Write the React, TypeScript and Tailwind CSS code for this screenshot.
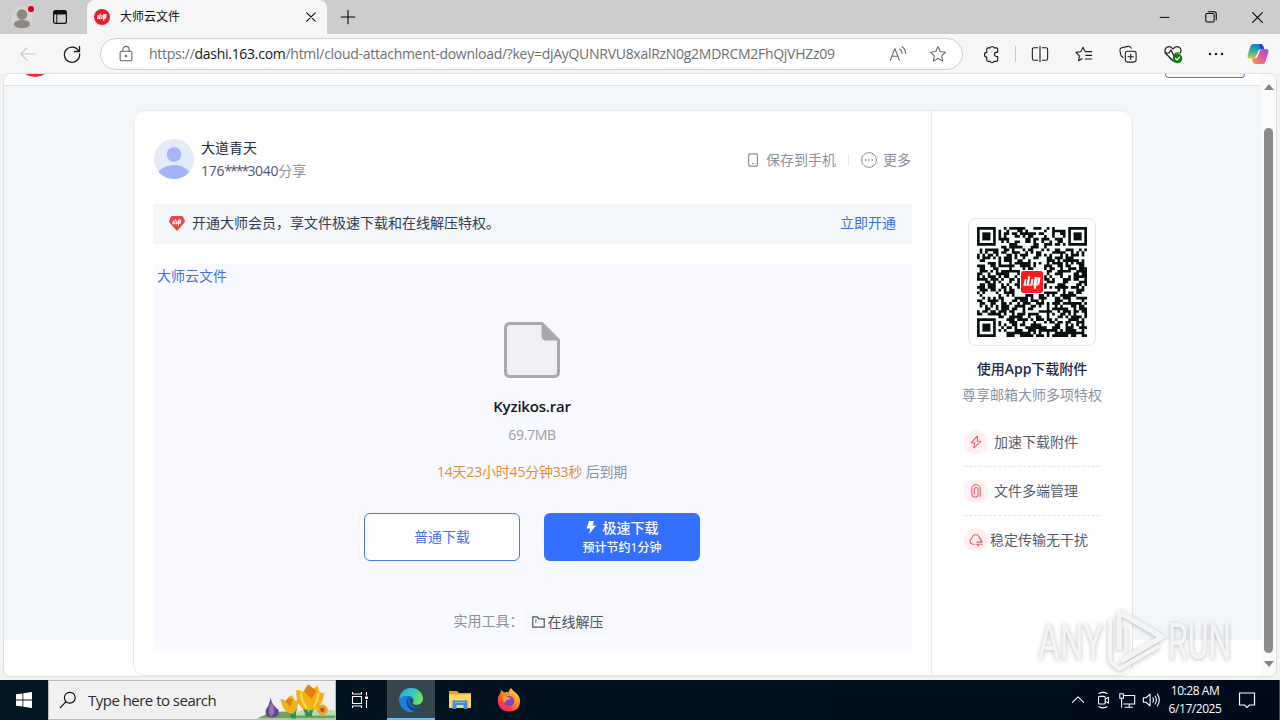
import type { ReactNode } from "react";

const QR_SIZE = 41;

function inFinder(x: number, y: number) {
  return (x < 8 && y < 8) || (x > QR_SIZE - 9 && y < 8) || (x < 8 && y > QR_SIZE - 9);
}

function buildQrPath() {
  let seed = 20163;
  let d = "";
  for (let y = 0; y < QR_SIZE; y++) {
    for (let x = 0; x < QR_SIZE; x++) {
      seed = (seed * 1103515245 + 12345) % 2147483648;
      const dark = (seed >> 16) % 100 < 54;
      const center = x > 15 && x < 25 && y > 15 && y < 25;
      if (dark && !center && !inFinder(x, y)) d += `M${x} ${y}h1v1h-1z`;
    }
  }
  return d;
}

const QR_PATH = buildQrPath();

function BrandMark({ color = "#fff" }: { color?: string }) {
  return (
    <g stroke={color} strokeWidth="1.6" fill="none">
      <path d="M3.400 6.500 2.500 11.600M6.200 4.300 4.900 11.600M8.700 6.500 7.800 11.600M11.300 4.800 10.100 11.600M14.100 5.200 13.200 10.500M11.900 5.800 10.400 14.200" />
      <path d="M2 11.100h6.200M10.500 5.700h3.500M10.500 11h2.800" strokeWidth=".9" />
    </g>
  );
}

function QrCode() {
  return (
    <svg width="110" height="110" viewBox="0 0 41 41" fill="#07120f">
      <path d={QR_PATH} shapeRendering="geometricPrecision" />
      {[[0, 0], [34, 0], [0, 34]].map(([x, y]) => (
        <g key={`${x}-${y}`}>
          <path fillRule="evenodd" d={`M${x} ${y}h7v7h-7zM${x + 1} ${y + 1}v5h5v-5z`} />
          <rect x={x + 2} y={y + 2} width="3" height="3" />
        </g>
      ))}
      <rect x="16" y="16" width="9" height="9" rx="1" fill="#fff" />
      <rect x="16.400" y="16.400" width="8.200" height="8.200" rx="0.900" fill="#fb1b22" />
      <g transform="translate(16.500 16.300) scale(.48)">
        <BrandMark />
      </g>
    </svg>
  );
}

function Icon({ size = 20, className = "", children }: { size?: number; className?: string; children: ReactNode }) {
  return (
    <svg
      width={size}
      height={size}
      viewBox="0 0 20 20"
      fill="none"
      stroke="currentColor"
      strokeWidth="1.2"
      strokeLinecap="round"
      strokeLinejoin="round"
      className={`shrink-0 ${className}`}
    >
      {children}
    </svg>
  );
}

function TabStrip() {
  return (
    <div className="flex h-[34px] shrink-0 bg-[#cdcdcd]">
      <div className="flex w-[87px] items-center rounded-br-lg pl-[11px]">
        <svg width="26" height="26" viewBox="0 0 26 26">
          <circle cx="11" cy="13.500" r="11" fill="#d6d3d1" />
          <circle cx="11" cy="10.500" r="5.200" fill="#8c8783" />
          <path d="M3 20c0-2.800 3.500-4 8-4s8 1.200 8 4c0 2.500-3.500 4.200-8 4.200S3 22.500 3 20z" fill="#8c8783" />
          <circle cx="20" cy="5" r="4" fill="#d6cccc" />
          <circle cx="20" cy="5" r="3.100" fill="#c50f1f" />
        </svg>
        <svg width="16" height="16" viewBox="0 0 16 16" className="ml-[15px]">
          <rect x="1.600" y="1.600" width="12.800" height="12.800" rx="2" fill="none" stroke="#111" strokeWidth="1.200" />
          <path d="M1.500 5.500V3.500q0-2 2-2h9q2 0 2 2v2z" fill="#111" />
          <path d="M4.800 5v9" stroke="#111" />
        </svg>
      </div>
      <div className="flex w-[240px] items-center rounded-t-lg bg-[#f7f7f7] pl-[7px]">
        <svg width="16" height="16" viewBox="0 0 16 16">
          <circle cx="8" cy="8" r="8" fill="#ea1d2c" />
          <g transform="translate(1.800 1.400) scale(.74)">
            <BrandMark />
          </g>
        </svg>
        <span className="ml-2.5 text-xs leading-4 text-[#111]">大师云文件</span>
        <Icon size={14} className="ml-auto mr-[9px] text-black">
          <path d="m4 4 12 12M16 4 4 16" strokeWidth="1.500" />
        </Icon>
      </div>
      <Icon size={18} className="ml-3 mt-2 text-black">
        <path d="M10 2.500v15M2.500 10h15" />
      </Icon>
      <div className="ml-auto mr-[15px] flex items-center gap-[32px] text-black">
        <Icon size={16} className="-mr-px">
          <path d="M4 10.500h11" />
        </Icon>
        <Icon size={14}>
          <rect x="2.500" y="5" width="12" height="12" rx="2" strokeWidth="1.500" />
          <path d="M6 2.500h8.500q3 0 3 3V14" strokeWidth="1.500" />
        </Icon>
        <Icon size={15}>
          <path d="m3.500 3.500 13 13M16.500 3.500l-13 13" strokeWidth="1.500" />
        </Icon>
      </div>
    </div>
  );
}

function Toolbar() {
  return (
    <div className="flex h-10 shrink-0 items-center bg-[#f7f7f7] text-[#1b1b1b]">
      <Icon size={18} className="ml-[19px] text-[#c9c9c9]">
        <path d="M18 10H2M9 3l-7 7 7 7" />
      </Icon>
      <Icon size={20} className="ml-[25px]">
        <path d="M16.800 7.200A7.600 7.600 0 1 0 17.600 10M17.500 2.500v5h-5" strokeWidth="1.300" />
      </Icon>
      <div className="ml-[18px] flex h-8 w-[863px] items-center rounded-full border border-[#d0d0d0] bg-white text-[#666]">
        <Icon size={18} className="ml-4">
          <rect x="3.500" y="7" width="13" height="10.500" rx="1.500" />
          <path d="M6.500 7V5a3.500 3.500 0 0 1 7 0v2" />
          <circle cx="10" cy="12.200" r=".8" fill="currentColor" />
        </Icon>
        <span className="ml-[14px] whitespace-nowrap text-sm tracking-[-0.28px] text-[#6f6f6f]">
          https://<span className="text-[#161616]">dashi.163.com</span>/html/cloud-attachment-download/?key=djAyQUNRVU8xalRzN0g2MDRCM2FhQjVHZz09
        </span>
        <Icon size={18} className="ml-auto">
          <path d="m1.500 17 5-13 5 13M3.500 12.500h6.200M12 4.500q2.500 1.500 2.500 5M14.500 2q4 2.800 4 7.500" />
        </Icon>
        <Icon size={18} className="ml-[22px] mr-[15px]">
          <path d="m10 1.800 2.500 5.400 5.900.8-4.300 4 1.100 5.900-5.200-2.900-5.200 2.900 1.100-5.900-4.300-4 5.900-.8z" />
        </Icon>
      </div>
      <Icon size={19} className="ml-[19px]">
        <path d="M6.500 3h2.200a2 2 0 0 1 3.800 0H15q1.500 0 1.500 1.500v3h-1a2.300 2.300 0 0 0 0 4.600h1v3.500q0 1.600-1.500 1.600h-2.500a2 2 0 0 1-3.800 0H6.500Q5 17.200 5 15.600v-3a2.400 2.400 0 0 1 0-4.800V4.500Q5 3 6.500 3z" />
      </Icon>
      <div className="ml-[14px] h-4 w-px bg-[#c9c9c9]" />
      <div className="ml-[15px] flex items-center gap-[26px]">
        <Icon size={18}>
          <path d="M7.500 3H3.500Q1.500 3 1.500 5v10q0 2 2 2h4M12.500 3h4q2 0 2 2v10q0 2-2 2h-4M10 1.500v17" />
        </Icon>
        <Icon size={18}>
          <path d="M7.800 15.200 4 17.500l.9-5.400L1 8.200l5.400-.8L8.900 2.500l2.500 4.900h7.100M12 11.500h6.500M11.500 15.500h7" />
        </Icon>
        <Icon size={18}>
          <rect x="7" y="7" width="12" height="12" rx="2.500" />
          <path d="M13 10v6M10 13h6M4.500 14Q2.500 13 2 11L1 6Q.8 3.500 3 3l7-1.500q2.500-.3 3.500 2" />
        </Icon>
        <Icon size={20}>
          <path d="M10 17 2.800 9.500C-.5 4 6.500 0 10 5c3.500-5 10.500-1 7.200 4M2 9h4l2-3 3 6 2-3h3" />
          <circle cx="14.500" cy="14.500" r="4.800" fill="#0f7b16" stroke="none" />
          <path d="m12.500 14.500 1.500 1.500 2.600-2.900" stroke="#fff" />
        </Icon>
        <Icon size={16} className="-ml-px">
          <g fill="currentColor" stroke="none">
            <circle cx="2.500" cy="10" r="1.600" />
            <circle cx="10" cy="10" r="1.600" />
            <circle cx="17.500" cy="10" r="1.600" />
          </g>
        </Icon>
      </div>
      <svg width="22" height="22" viewBox="0 0 22 22" className="ml-[23px] shrink-0">
        <defs>
          <linearGradient id="cpA" x1="0" y1="0" x2="0" y2="1">
            <stop offset="0" stopColor="#1779d9" />
            <stop offset=".5" stopColor="#27b5a0" />
            <stop offset="1" stopColor="#e8c32c" />
          </linearGradient>
          <linearGradient id="cpB" x1="1" y1="0" x2="0" y2="1">
            <stop offset="0" stopColor="#8d55e8" />
            <stop offset=".5" stopColor="#e65aa0" />
            <stop offset="1" stopColor="#f79a3c" />
          </linearGradient>
        </defs>
        <path d="M6.500 1h7q2 0 2.700 2l.8 3h-3q-2 0-2.700 2L9 13.500q-.7 2-2.700 2H3q-3 0-2.300-3.500l2.500-8Q4 1 6.500 1z" fill="url(#cpA)" />
        <path d="M15.500 21h-7q-2 0-2.700-2L5 15.500h3q2 0 2.700-2l2-5.500q.7-2 2.700-2H19q3 0 2.300 3.500l-2.500 8Q18 21 15.500 21z" fill="url(#cpB)" />
        <path d="M12.500 1h1q2 0 2.700 2l.8 3h-3q-1 0-1.500.5z" fill="#1b4fc0" />
      </svg>
    </div>
  );
}

function FileHeader() {
  return (
    <div className="flex h-10 items-center">
      <svg width="40" height="40" viewBox="0 0 40 40">
        <clipPath id="avatar">
          <circle cx="20" cy="20" r="20" />
        </clipPath>
        <g clipPath="url(#avatar)">
          <rect width="40" height="40" fill="#e5eafa" />
          <circle cx="20" cy="15.500" r="7.300" fill="#a4b6f8" />
          <ellipse cx="20" cy="38" rx="17" ry="12" fill="#a4b6f8" />
        </g>
      </svg>
      <div className="ml-[7px] text-sm leading-[23px]">
        <div className="text-[#222b45]">大道青天</div>
        <div className="tracking-[-0.3px] text-[#515970]">
          176<span className="tracking-[-1.9px]">****</span>3040<span className="tracking-normal text-[#8e95a3]">分享</span>
        </div>
      </div>
      <div className="ml-auto mr-px mt-0.5 flex items-center text-sm text-[#8b919f]">
        <svg width="12" height="14" viewBox="0 0 12 14" fill="none" stroke="currentColor" strokeWidth="1.200">
          <rect x="1.600" y=".8" width="8.800" height="12.400" rx="1" />
          <path d="M5 10.500h2" />
        </svg>
        <span className="ml-[7px]">保存到手机</span>
        <span className="mx-3 h-3 w-px bg-[#e4e6ea]" />
        <svg width="16" height="16" viewBox="0 0 16 16" fill="none" stroke="currentColor">
          <circle cx="8" cy="8" r="7.400" />
          <path d="M4 8h1.500M7.250 8h1.500M10.500 8h1.500" strokeWidth="1.500" />
        </svg>
        <span className="ml-1.5">更多</span>
      </div>
    </div>
  );
}

function VipBanner() {
  return (
    <div className="-ml-px mt-[25px] flex h-10 items-center bg-[#f4f7f9] pb-0.5 pl-4 pr-4 text-sm">
      <svg width="16" height="15" viewBox="0 0 16 15">
        <path d="M3.500 0h9q1 0 1.600.8L15.500 4q.9 1.500-.2 2.800L9 14q-1 1-2 0L.7 6.800Q-.4 5.500.5 4L1.900.8Q2.500 0 3.500 0z" fill="#ef4444" />
        <g transform="translate(2.200 .2) scale(.68)">
          <BrandMark />
        </g>
      </svg>
      <span className="ml-[7px] text-[#333b52]">开通大师会员，享文件极速下载和在线解压特权。</span>
      <a className="ml-auto text-[#386ee8]">立即开通</a>
    </div>
  );
}

function FilePanel() {
  return (
    <div className="mt-5 flex h-[387px] flex-col items-center bg-[#f8faff] pr-0.5">
      <a className="ml-[3px] self-start text-sm leading-6 text-[#4671e5]">大师云文件</a>
      <svg width="56" height="56" viewBox="0 0 56 56" className="mt-[34px] shrink-0">
        <path d="M6 1.500h32L54.500 18v32q0 4.500-4.500 4.500H6q-4.500 0-4.500-4.500V6q0-4.500 4.500-4.500z" fill="#efeff4" stroke="#a9a9ad" strokeWidth="3" />
        <path d="M37.500.5 55.500 18.500H42.500q-5 0-5-5z" fill="#a9a9ad" />
      </svg>
      <div className="mt-4 text-[15px] font-semibold leading-6 tracking-[-0.2px] text-[#16181d]">Kyzikos.rar</div>
      <div className="mt-[5px] text-sm leading-6 tracking-[-0.3px] text-[#9a9ea8]">69.7MB</div>
      <div className="mt-[13px] whitespace-nowrap text-sm leading-6 tracking-[-0.2px] text-[#8b919f]">
        <span className="text-[#e88b35]">14天23小时45分钟33秒</span> 后到期
      </div>
      <div className="mt-[29px] flex gap-6">
        <button className="h-12 w-[156px] rounded-md border border-[#4a78e8] bg-white text-sm text-[#4671e5]">普通下载</button>
        <button className="flex h-12 w-[156px] flex-col items-center justify-center rounded-md bg-[#3370ff] text-white">
          <span className="flex items-center text-sm font-medium leading-5">
            <svg width="10" height="13" viewBox="0 0 10 13" fill="currentColor" className="mr-[7px]">
              <path d="M3 0h5L6.500 4.500H10L3.200 13l1-5.500H.5z" />
            </svg>
            极速下载
          </span>
          <span className="text-xs font-medium leading-[19px]">预计节约1分钟</span>
        </button>
      </div>
      <div className="mt-[49px] flex items-center pr-0.5 text-sm text-[#8b919f]">
        <span className="pb-0.5">实用工具：</span>
        <span className="ml-[1px] flex h-6 items-center rounded bg-[#f6f7f9] pl-[7px] pr-[5px] text-[#50545f]">
          <svg width="13" height="12" viewBox="0 0 13 12" fill="none" stroke="currentColor" strokeWidth="1.200" className="mr-[3px]">
            <path d="M.8.800h4.500l1.500 2h5.400v8.400H.8zM3 4h1.600M3 6h1.600" />
          </svg>
          在线解压
        </span>
      </div>
    </div>
  );
}

const perks = [
  {
    label: "加速下载附件",
    gap: "ml-1.5",
    icon: <path d="M12 1.500 3 11h5l-1 7.500L17 9h-5z" />,
  },
  {
    label: "文件多端管理",
    gap: "ml-1.5",
    icon: <path d="M4 14V6.500a6 5.500 0 0 1 12 0V18M4 14q0 4.500 3.500 4.500h2q3.500 0 3.500-4V8q0-3-2.800-3T7.500 8v6.500" />,
  },
  {
    label: "稳定传输无干扰",
    gap: "ml-0.5",
    icon: <path d="M8 16H5.500A4.500 4.500 0 0 1 4 7.500C5.500.5 14.500 1 15 8q3 .5 3 2.500M11 13h8l-2.500-2M19 16h-8l2.500 2.500" />,
  },
];

function AppPromo() {
  return (
    <div className="flex w-[201px] flex-col items-center border-l border-[#e7e9ee] pt-[107px]">
      <div className="flex h-32 w-32 items-center justify-center rounded-lg border border-[#e6e8ec] bg-white">
        <QrCode />
      </div>
      <div className="mt-[11px] text-sm font-medium leading-6 tracking-[-0.05px] text-[#222b45]">
        使用<span className="font-semibold">App</span>下载附件
      </div>
      <div className="mt-0.5 text-sm leading-6 text-[#8d93a1]">尊享邮箱大师多项特权</div>
      <div className="mt-[11px] w-[136px]">
        {perks.map((perk, i) => (
          <div
            key={perk.label}
            className={`flex h-[49px] items-center border-b border-dashed text-sm text-[#555c6d] ${i < 2 ? "border-[#e1e4ea]" : "border-transparent"}`}
          >
            <span className="flex h-6 w-6 shrink-0 items-center justify-center rounded-full bg-[#fff1f1] text-[#ee5c5f]">
              <Icon size={14}>
                <g strokeWidth="1.600">{perk.icon}</g>
              </Icon>
            </span>
            <span className={`whitespace-nowrap ${perk.gap}`}>{perk.label}</span>
          </div>
        ))}
      </div>
    </div>
  );
}

function Page() {
  return (
    <div className="mx-[3px] flex h-[604px] shrink-0 overflow-hidden rounded-lg border border-[#e0e0e0] bg-white">
      <div className="min-w-0 flex-1">
        <div className="flex h-3 justify-between border-b border-[#e2e4e8] bg-white pl-5 pr-4">
          <svg width="22" height="4" viewBox="0 0 22 4">
            <path d="M1 0h20Q11 6 1 0z" fill="#e8293b" />
          </svg>
          <div className="h-1 w-20 rounded-b border border-t-0 border-[#5c72d0]" />
        </div>
        <div className="h-[554px] bg-[#f4f7fa] pl-[129px] pt-6">
          <div className="flex h-[566px] w-[1000px] rounded-xl border border-[#e7e9ee] bg-white">
            <div className="min-w-0 flex-1 pl-5 pr-[19px] pt-7">
              <FileHeader />
              <VipBanner />
              <FilePanel />
            </div>
            <AppPromo />
          </div>
        </div>
      </div>
      <div className="flex w-[15px] flex-col items-center bg-[#fbfbfb] pt-[10px]">
        <svg width="10" height="6" viewBox="0 0 10 6" className="shrink-0">
          <path d="M5 0 10 6H0z" fill="#858585" />
        </svg>
        <div className="mt-[38px] h-[525px] w-[9px] shrink-0 rounded-full bg-[#8b8b8b]" />
        <svg width="10" height="6" viewBox="0 0 10 6" className="mt-2 shrink-0">
          <path d="M0 0h10L5 6z" fill="#858585" />
        </svg>
      </div>
    </div>
  );
}

function Flowers() {
  return (
    <svg width="78" height="38" viewBox="0 0 80 38" className="ml-auto self-end">
      <path d="M0 38q18-10 40-6 20-7 40-1v7z" fill="#6ba35b" />
      <path d="M40 31q20-6 40-1v5H40z" fill="#b9dcb1" />
      <path d="M35 38q0-8-7-13 8 3 9 10 1-5 5-8-3 5-2 11zM50 36q-2-10-8-14 9 3 11 10 2-9 12-14-7 6-9 18z" fill="#299650" />
      <path d="M14 16q0 7 8 13 2 7-6 8-9 0-7-8 4-5 5-13z" fill="#66488c" />
      <path d="M15 21q-5 8-1 15 7-3 1-15z" fill="#9473b4" />
      <path d="M24 18q4 0 6 3 2-7 6-7 2 3 3 6l4-2q-1 12-7 15-9 0-12-15z" fill="#f2b01b" />
      <path d="m29 20 3-3 5 1-3 8z" fill="#e67d18" />
      <path d="M40 9q4-1 7 2l5-8 5 5 5-4 2 7 5 1q-2 14-10 17-12 2-15-4-4-6-4-16z" fill="#f3b318" />
      <path d="m48 10 5-7 8 7-5 8z" fill="#e77c17" />
      <path d="M45 12q1 10 6 15M63 12q-1 9-5 14" stroke="#ffdb50" strokeWidth="2" fill="none" />
      <circle cx="67" cy="29" r="5.500" fill="#efa32b" />
      <circle cx="67" cy="29" r="2.300" fill="#b8531d" />
    </svg>
  );
}

function Taskbar() {
  return (
    <div className="flex h-10 shrink-0 items-stretch bg-gradient-to-r from-[#00171f] to-[#000b1b] text-white">
      <div className="flex w-12 items-center justify-center">
        <svg width="16" height="16" viewBox="0 0 16 16" fill="#fff">
          <path d="M0 2.300 6.500 1.400V7.600H0zM7.300 1.200 16 0v7.600H7.300zM0 8.400h6.500v6.200L0 13.700zM7.300 8.400H16V16l-8.700-1.200z" />
        </svg>
      </div>
      <div className="flex w-[288px] items-center border border-[#b9bbbb] bg-[#f1f1f1] text-[#2b2b2b]">
        <Icon size={18} className="ml-[10px] text-black">
          <circle cx="12" cy="7.500" r="6" />
          <path d="m7.500 12-6 6.500" />
        </Icon>
        <span className="ml-[11px] whitespace-nowrap text-[15px] tracking-[-0.52px]">Type here to search</span>
        <Flowers />
      </div>
      <div className="flex w-[51px] items-center justify-center pr-1">
        <svg width="18" height="16" viewBox="0 0 18 16" fill="none" stroke="#fff" strokeWidth="1.100">
          <path d="M1.500 4.500h9v7h-9zM1.500 0v2h9V0M1.500 16v-2h9v2M15.500 0v3.500M15.500 8v8" />
          <path d="M14 4.500h3v2.500h-3z" fill="#fff" stroke="none" />
        </svg>
      </div>
      <div className="flex w-12 items-center justify-center border-b-2 border-[#76b9ed] bg-[#34464e] pt-0.5">
        <svg width="24" height="24" viewBox="0 0 24 24">
          <defs>
            <linearGradient id="edgeTop" x1="0" y1="0" x2="1" y2="0.300">
              <stop offset="0" stopColor="#2aa8dc" />
              <stop offset=".6" stopColor="#36c8b8" />
              <stop offset="1" stopColor="#69df5a" />
            </linearGradient>
          </defs>
          <circle cx="12" cy="12" r="12" fill="#0f68bd" />
          <path d="M.3 11C1 4 6 0 12 0c7 0 12 5 12 10.500 0 4-3 6.500-6.500 6.500-3 0-4.500-1.200-3.500-2.500 2-3-.5-6.500-4.500-6.500C5 8 1 9 .3 13z" fill="url(#edgeTop)" />
          <path d="M9.500 8C4.500 8 .5 10 .2 13 1 19 6 24 12 24c1 0 2-.2 3-.5C8 22 6 13 9.500 8z" fill="#1b84d8" />
          <path d="M9.300 9.800C7 14 11 20.500 17 20.300q3 0 5.500-2.200Q20 22 16 23.400C8 22 5.500 14 9.300 9.800z" fill="#114a8b" />
          <path d="M14 14.500c-1 1.300.5 2.500 3.500 2.500 3 0 5.500-1.500 6.300-4.500.4 2-.3 4-1.300 5.500q-3 1.700-6 1.200C12 18 10 14 11.500 10.500q3 1.500 2.500 4z" fill="#34464e" />
        </svg>
      </div>
      <div className="flex w-[49px] items-center justify-center">
        <svg width="22" height="18" viewBox="0 0 22 18">
          <path d="M0 0h8l2 2h12v15H0z" fill="#e8a317" />
          <path d="M0 3.500h22V17H0z" fill="#ffd766" />
          <path d="M3.500 9.500h15V18h-4v-4h-7v4h-4z" fill="#3b90d2" />
          <path d="M5.500 11.500h11" stroke="#75bfed" />
        </svg>
      </div>
      <div className="flex w-[49px] items-center justify-center">
        <svg width="24" height="24" viewBox="0 0 24 24">
          <defs>
            <linearGradient id="fox" x1="1" y1="0" x2="0.200" y2="1">
              <stop offset="0" stopColor="#fff04a" />
              <stop offset=".4" stopColor="#ff9a24" />
              <stop offset=".75" stopColor="#ff4537" />
              <stop offset="1" stopColor="#eb1f7d" />
            </linearGradient>
          </defs>
          <path d="M14 0q2 3 4 4 5 4 5 9 0 10-11 10.500Q1 23 .8 13 .8 8 3.500 5q0-2 .5-3 2 1 3 2.500 3-.8 4.500 0Q12 2 14 0z" fill="url(#fox)" />
          <circle cx="12" cy="13" r="5.300" fill="#7a42d8" />
          <path d="M5 8q4-1 6 1l3 1q-1 2-4 2-2 1-1 3-4-1-4-7z" fill="#ff9422" />
        </svg>
      </div>
      <div className="ml-auto flex items-center">
        <Icon size={14}>
          <path d="m2 13.500 8-8 8 8" strokeWidth="1.500" />
        </Icon>
        <Icon size={18} className="ml-[9px]">
          <rect x="5" y="6" width="7.500" height="8.500" rx="1.500" />
          <path d="m12.500 9 3.500-2v6.500l-3.500-2M5.500 2.800q4.500-2.500 9 0M5.500 17.500q4.500 2.500 9 0" />
        </Icon>
        <Icon size={18} className="ml-[6px]">
          <path d="M6 5h12.500v9.500H6.500M12.500 14.500V18M8 18h8M2 3h4v5H2zM4 8v10" strokeLinecap="square" strokeLinejoin="miter" />
        </Icon>
        <Icon size={18} className="ml-[6px]">
          <path d="M1.500 7.500h3L9 3.500v13l-4.500-4h-3zM12 7.500q1.500 2.500 0 5M14.500 5.500q3 4.500 0 9M17 3.500q4.500 6.500 0 13" />
        </Icon>
        <div className="ml-1 w-[62px] whitespace-nowrap text-center text-xs leading-[18px] tracking-[-0.45px]">
          <div>10:28 AM</div>
          <div>6/17/2025</div>
        </div>
        <Icon size={20} className="ml-[11px] mr-[22px]">
          <path d="M2.500 3h15v12h-5L10 17.500 7.500 15h-5z" strokeLinejoin="miter" />
        </Icon>
        <div className="h-10 w-px bg-[#40505a]" />
      </div>
    </div>
  );
}

function Watermark() {
  return (
    <div className="pointer-events-none absolute left-[1038px] top-[604px] flex h-[76px] items-center whitespace-nowrap font-['Roboto',sans-serif] text-[50px] leading-[60px] text-[#f5f5f5] drop-shadow-[0_1px_2px_rgba(0,0,0,0.25)]">
      <span className="w-[66px] origin-left scale-x-[0.67]">ANY</span>
      <svg width="64" height="76" viewBox="68 0 64 76" fill="none" stroke="currentColor" strokeLinejoin="round">
        <path d="M83 46V8l43 25-41 24" strokeWidth="5" />
        <path d="M74 14v43l9 8 40-23" strokeWidth="4" />
        <path d="M90 22v25" strokeWidth="3" />
      </svg>
      <span className="w-[66px] origin-left scale-x-[0.64]">RUN</span>
    </div>
  );
}

export default function App() {
  return (
    <div className="relative flex h-[720px] w-[1280px] flex-col overflow-hidden bg-[#f3f3f3] font-['Open_Sans','Noto_Sans_CJK_SC',sans-serif]">
      <TabStrip />
      <Toolbar />
      <div className="-mt-px mb-[3px]">
        <Page />
      </div>
      <Taskbar />
      <Watermark />
    </div>
  );
}
